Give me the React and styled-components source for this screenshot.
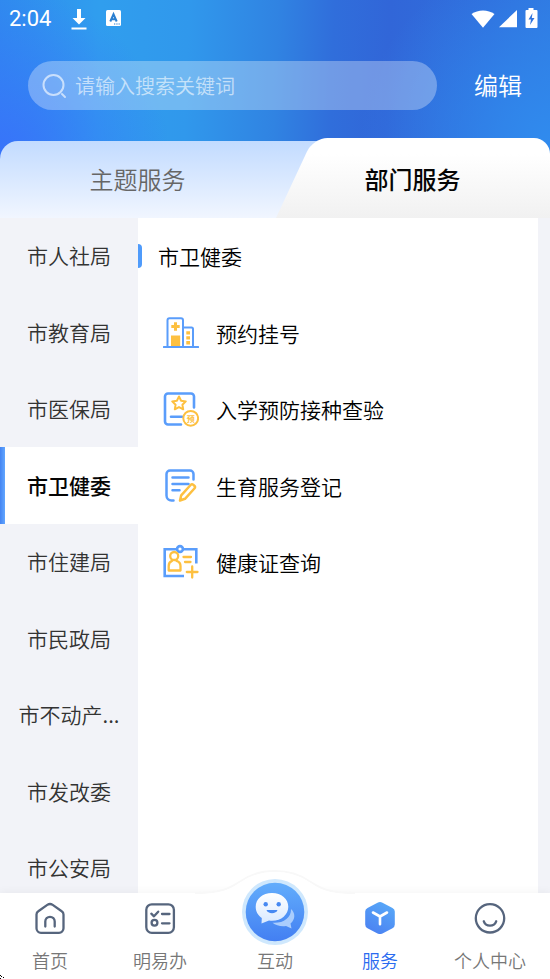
import React from 'react';
import styled, { createGlobalStyle, css } from 'styled-components';

const GlobalStyle = createGlobalStyle`
  *, *::before, *::after { box-sizing: border-box; }
  body {
    margin: 0;
    font-family: "Noto Sans CJK SC", "Noto Sans", sans-serif;
    font-weight: 350;
    color: #000;
    background: #f2f3f8;
  }
  button, input { font: inherit; color: inherit; border: 0; padding: 0; margin: 0; background: none; }
  button { cursor: pointer; }
  h2 { margin: 0; font-weight: inherit; }
`;

const Page = styled.div`
  height: 100vh;
  display: flex;
  flex-direction: column;
  overflow: hidden;
  position: relative;
`;

const Header = styled.header`
  flex: none;
  background:
    radial-gradient(circle at 0 72%, #3873fa 0, rgba(56, 115, 250, 0) 170px),
    radial-gradient(circle at 100% 66%, #308bee 0, rgba(48, 139, 238, 0) 190px),
    linear-gradient(92deg, #2f8bee 0%, #309eee 18%, #3098ec 34%, #3083e2 50%, #306edb 60%, #3166d8 70%, #306fdd 88%, #3078e0 100%);
`;

const StatusBar = styled.div`
  height: 38px;
  padding: 0 9px 0 9px;
  display: flex;
  align-items: center;
  color: #fff;
`;

const Clock = styled.time`
  width: 61px;
  font: 400 22px/26px Roboto, sans-serif;
`;

const StatusIcons = styled.div`
  display: flex;
  align-items: center;
  gap: ${(p) => p.$gap}px;
  margin-left: ${(p) => (p.$end ? 'auto' : '0')};
  svg { display: block; }
`;

const SearchRow = styled.form`
  padding: 23px 28px 28px;
  display: flex;
  align-items: center;
  gap: 37px;
`;

const SearchBox = styled.label`
  flex: 1;
  min-width: 0;
  height: 49px;
  padding: 0 16px 0 13px;
  display: flex;
  align-items: center;
  gap: 8px;
  border-radius: 25px;
  background: rgba(255, 255, 255, 0.31);
  color: rgba(255, 255, 255, 0.62);
  svg { flex: none; }
`;

const SearchInput = styled.input`
  flex: 1;
  min-width: 0;
  font-size: 20px;
  line-height: 30px;
  outline: none;
  color: #fff;
  &::placeholder { color: rgba(255, 255, 255, 0.6); opacity: 1; }
`;

const EditButton = styled.button`
  flex: none;
  font-size: 24px;
  line-height: 36px;
  padding-bottom: 2px;
  color: #fff;
`;

const Tabs = styled.div`
  display: grid;
  grid-template-columns: 1fr 1fr;
  align-items: end;
  height: 80px;
  isolation: isolate;
  position: relative;
  &::before {
    content: '';
    position: absolute;
    inset: 3px 20px 0 0;
    z-index: -1;
    border-radius: 18px 0 0 0;
    background: linear-gradient(#c2dbff, #f1f6ff);
  }
`;

const Tab = styled.button`
  position: relative;
  height: 80px;
  font-size: 24px;
  line-height: 36px;
  padding-top: 1px;
  color: #666;
  ${(p) => p.$active && css`
    color: #050505;
    font-weight: 500;
    isolation: isolate;
    &::before, &::after {
      content: '';
      position: absolute;
      z-index: -1;
      top: 0;
      bottom: 0;
      background: linear-gradient(#fff 20%, #f1f1f1);
    }
    &::before {
      left: 1px;
      width: 70%;
      border-radius: 14px 0 0 0;
      transform: skewX(-25deg);
      transform-origin: 0 100%;
    }
    &::after { left: 30%; right: 0; border-radius: 0 16px 0 0; }
  `}
`;

const Content = styled.main`
  flex: 1;
  min-height: 0;
  overflow: hidden;
  display: grid;
  grid-template-columns: 138px 1fr;
  padding-right: 12px;
`;

const rowRhythm = css`
  height: 76px;
  &:nth-child(even) { height: 77px; }
`;

const Sidebar = styled.nav`
  display: flex;
  flex-direction: column;
`;

const Department = styled.button`
  ${rowRhythm}
  flex: none;
  font-size: 21px;
  line-height: 32px;
  padding-bottom: 2px;
  white-space: nowrap;
  color: #333;
  ${(p) => p.$active && css`
    color: #050505;
    font-weight: 500;
    background: linear-gradient(90deg, #4484f2, #62a6ff) left / 5px 100% no-repeat #fff;
  `}
`;

const Panel = styled.section`
  background: #fff;
  font-size: 21px;
  line-height: 32px;
`;

const PanelRow = styled.div`
  ${rowRhythm}
  display: flex;
  align-items: center;
`;

const PanelTitle = styled.h2`
  display: flex;
  align-items: center;
  gap: 16px;
  font-size: 21px;
  line-height: 32px;
  &::before {
    content: '';
    width: 4px;
    height: 24px;
    border-radius: 0 4px 4px 0;
    background: #4f9bfb;
  }
`;

const Service = styled.button`
  flex: 1;
  display: flex;
  align-items: center;
  gap: 17px;
  padding-left: 25px;
  text-align: left;
  svg { flex: none; }
`;

const BottomNav = styled.nav`
  position: relative;
  flex: none;
  height: 86px;
  display: grid;
  grid-template-columns: 100fr 120fr 110fr 100fr 120fr;
  background: #fff;
  box-shadow: 0 -2px 8px rgba(0, 0, 0, 0.04);
`;

const Bump = styled.svg`
  position: absolute;
  left: 50%;
  top: -23px;
  margin-left: -80px;
`;

const NavItem = styled.button`
  position: relative;
  display: flex;
  flex-direction: column;
  align-items: center;
  justify-content: flex-end;
  gap: 12px;
  padding-bottom: 5px;
  font-size: 18px;
  line-height: 28px;
  color: ${(p) => (p.$active ? '#2a6bf0' : '#777')};
`;

const ChatBadge = styled.svg`
  position: absolute;
  left: 50%;
  top: -14px;
  margin-left: -33px;
`;

const Pointer = styled.svg`
  position: absolute;
  left: 0;
  bottom: 0;
`;

const BLUE = '#5a9dfb';
const YELLOW = '#fdc040';

const Drawing = ({ size = 36, children, ...rest }) => (
  <svg width={size} height={size} viewBox={`0 0 ${size} ${size}`} fill="none" strokeWidth="2.300" strokeLinecap="round" strokeLinejoin="round" aria-hidden="true" {...rest}>
    {children}
  </svg>
);

const HospitalIcon = () => (
  <Drawing stroke={BLUE}>
    <path d="M0.800 32H35.200" strokeWidth="2" />
    <path d="M4.500 32V5.200a2 2 0 0 1 2-2H18a2 2 0 0 1 2 2V32M21 12.500h7.500a1.500 1.500 0 0 1 1.500 1.500V32" strokeWidth="2" />
    <path d="M12.500 7.300v8.400M8.300 11.500h8.400" stroke={YELLOW} strokeWidth="3" strokeLinecap="butt" />
    <path fill={YELLOW} stroke="none" d="M8 20.500h9.200V31H8zM23.300 16.300h3.700v3.300h-3.700zM23.300 21.200h3.700v3.300h-3.700zM23.300 26.100h3.700v3.300h-3.700z" />
  </Drawing>
);

const VaccineIcon = () => (
  <Drawing stroke={BLUE}>
    <path strokeWidth="2.600" d="M31 16.500V5.500a3 3 0 0 0-3-3H5a3 3 0 0 0-3 3v25a3 3 0 0 0 3 3h13M8 25.700h11" />
    <path stroke={YELLOW} strokeWidth="2" d="M16 5.500l2.100 4.200 4.700.7-3.400 3.300.8 4.600-4.200-2.200-4.200 2.200.8-4.600-3.400-3.300 4.700-.7z" />
    <circle cx="27.700" cy="27.300" r="7.400" stroke={YELLOW} strokeWidth="2" />
    <text x="27.700" y="30.500" fontSize="8" fontWeight="700" textAnchor="middle" fill={YELLOW} stroke="none">预</text>
  </Drawing>
);

const RegisterIcon = () => (
  <Drawing stroke={BLUE}>
    <path strokeWidth="2.500" d="M30.500 11.500V6a3.500 3.500 0 0 0-3.500-3.500H7A3.500 3.500 0 0 0 3.500 6v21.500a5 5 0 0 0 5 5H10.500M9.500 9.500H25.500M9.500 16H25.500M9.500 22.300h7" />
    <path stroke={YELLOW} strokeWidth="2.500" d="M17 32.500l1.200-5.200L27.600 17a2 2 0 0 1 2.800-.1l.9.800a2 2 0 0 1 .1 2.800L22 30.800z" />
  </Drawing>
);

const CertificateIcon = () => (
  <Drawing stroke={BLUE}>
    <path d="M14 5.200H1.700V32H21M20 5.200H33.300V19.500" strokeLinecap="butt" strokeLinejoin="miter" strokeWidth="2.600" />
    <circle cx="17" cy="5" r="2.900" strokeWidth="2.600" />
    <g stroke={YELLOW}>
      <circle cx="11.200" cy="12" r="4" />
      <path d="M9 16.800Q5.700 18 5.700 22V26.500H17.500V22Q17.500 18 13.500 16.800M20.500 13H28M22 18h5.500M29.200 22.500V33.500M23.800 28H34.500" />
    </g>
  </Drawing>
);

const HomeIcon = () => (
  <Drawing size={32} stroke="#56657d">
    <path d="M2.500 12.500a4 4 0 0 1 1.800-3.300l9-6.300a5 5 0 0 1 5.400 0l9 6.300a4 4 0 0 1 1.800 3.300V26.300a4.500 4.500 0 0 1-4.500 4.500H7a4.500 4.500 0 0 1-4.500-4.500zM11.300 24.500v-5a4.700 4.700 0 0 1 9.400 0v5" />
  </Drawing>
);

const ChecklistIcon = () => (
  <Drawing size={32} stroke="#56657d">
    <rect x="2.300" y="2.300" width="27.600" height="28.500" rx="5.500" />
    <path d="M7.300 11.700l2.700 2.600 4.200-4.600M18 12h7.500M18 21.300h7.500" />
    <circle cx="10.500" cy="20.700" r="2.900" />
  </Drawing>
);

const ServiceIcon = () => (
  <Drawing size={32}>
    <defs>
      <linearGradient id="hex" x1="0.800" y1="0" x2="0.300" y2="1">
        <stop stopColor="#58a9f8" /><stop offset="1" stopColor="#4b82f2" />
      </linearGradient>
    </defs>
    <path fill="url(#hex)" d="M13.500.8a5 5 0 0 1 5 0l10 5.200a4 4 0 0 1 2.300 3.700V22.500a4 4 0 0 1-2.300 3.700l-10 5.200a5 5 0 0 1-5 0l-10-5.200a4 4 0 0 1-2.300-3.700V9.700A4 4 0 0 1 3.500 6z" />
    <path stroke="#fff" strokeWidth="2.600" d="M9 10.500l7 4L23 10.500M16 14.500V22.200" />
  </Drawing>
);

const ProfileIcon = () => (
  <Drawing size={32} stroke="#56657d">
    <circle cx="16" cy="16.300" r="14.200" />
    <path d="M9.800 19.300c2 5.800 10.400 5.800 12.400 0" />
  </Drawing>
);

const ChatIcon = () => (
  <ChatBadge width="66" height="66" viewBox="0 0 66 66" aria-hidden="true">
    <defs>
      <linearGradient id="disc" x2="0" y2="1">
        <stop stopColor="#62adfc" /><stop offset="1" stopColor="#437ff2" />
      </linearGradient>
      <linearGradient id="bubble" x2="0" y2="1">
        <stop stopColor="#fff" /><stop offset="1" stopColor="#d9e9ff" />
      </linearGradient>
    </defs>
    <circle cx="33" cy="33" r="33" fill="#cfe8fd" />
    <circle cx="33" cy="33" r="29.300" fill="url(#disc)" />
    <path fill="#aacdfd" d="M49 30c4.500 4 4.500 10.500-.5 14.500l1 5-5.500-2.500c-5 .8-10-.5-13.500-3.200C41 44.500 49.500 39 49 30z" />
    <path fill="url(#bubble)" d="M30 14c9.500 0 16.300 6 16.300 13.800S39.500 41.800 30 41.800c-1 0-2 0-3-.2L19.500 44.500l.3-5.500C16 36.500 13.700 32.500 13.700 27.800 13.700 20 20.500 14 30 14z" />
    <circle cx="23.700" cy="25.200" r="2.200" fill="#4789f2" />
    <circle cx="36.700" cy="25.200" r="2.200" fill="#4789f2" />
    <path fill="#4789f2" d="M24.500 31h11c-1 4.200-10 4.200-11 0z" />
  </ChatBadge>
);

const SearchIcon = () => (
  <Drawing size={26} stroke="currentColor" strokeWidth="2">
    <circle cx="12.500" cy="12" r="10" />
    <path d="M21 21l3 3" />
  </Drawing>
);

const departments = ['市人社局', '市教育局', '市医保局', '市卫健委', '市住建局', '市民政局', '市不动产...', '市发改委', '市公安局'];

const services = [
  { name: '预约挂号', Icon: HospitalIcon },
  { name: '入学预防接种查验', Icon: VaccineIcon },
  { name: '生育服务登记', Icon: RegisterIcon },
  { name: '健康证查询', Icon: CertificateIcon },
];

const navItems = [
  { name: '首页', Icon: HomeIcon },
  { name: '明易办', Icon: ChecklistIcon },
  { name: '互动', Icon: ChatIcon },
  { name: '服务', Icon: ServiceIcon },
  { name: '个人中心', Icon: ProfileIcon },
];

export default function App() {
  const current = '市卫健委';
  return (
    <Page>
      <GlobalStyle />
      <Header>
        <StatusBar>
          <Clock>2:04</Clock>
          <StatusIcons $gap={18}>
            <svg width="18" height="24" viewBox="0 0 18 24" fill="#fff" aria-hidden="true">
              <path d="M7 2h4v9h4.500L9 17.500 2.500 11H7zM1.500 20.500h15v2h-15z" />
            </svg>
            <svg width="15" height="18" viewBox="0 0 15 18" aria-hidden="true">
              <rect width="15" height="16" rx="1.500" fill="#fff" />
              <path d="M4.300 11.500L7.500 4.300 10.700 11.500M5.500 9.200h4" fill="none" stroke="#2b7fd0" strokeWidth="2" />
              <path d="M8 14h1.300M10.300 14h1.300M12.500 14h1.300" stroke="#2b7fd0" strokeWidth="1.200" />
            </svg>
          </StatusIcons>
          <StatusIcons $gap={4} $end>
            <svg width="24" height="20" viewBox="0 0 24 20" fill="#fff" aria-hidden="true">
              <path d="M.5 5C7 .2 17 .2 23.500 5L12 18.800z" />
            </svg>
            <svg width="18" height="20" viewBox="0 0 18 20" fill="#fff" aria-hidden="true">
              <path d="M18 1v17.200H0z" />
            </svg>
            <svg width="20" height="24" viewBox="0 0 20 24" aria-hidden="true">
              <path d="M7.500 3V1h5v2h3q1 0 1 1v16q0 1-1 1h-10q-1 0-1-1V4q0-1 1-1z" fill="#fff" />
              <path d="M11.500 6l-4 6.500h2.500L9 18l4.500-7h-2.700z" fill="#3074de" />
            </svg>
          </StatusIcons>
        </StatusBar>
        <SearchRow onSubmit={(e) => e.preventDefault()}>
          <SearchBox>
            <SearchIcon />
            <SearchInput type="text" aria-label="搜索" placeholder="请输入搜索关键词" />
          </SearchBox>
          <EditButton type="button">编辑</EditButton>
        </SearchRow>
        <Tabs role="tablist">
          <Tab role="tab" aria-selected="false">主题服务</Tab>
          <Tab role="tab" aria-selected="true" $active>部门服务</Tab>
        </Tabs>
      </Header>
      <Content>
        <Sidebar aria-label="部门">
          {departments.map((name) => (
            <Department key={name} $active={name === current}>{name}</Department>
          ))}
        </Sidebar>
        <Panel>
          <PanelRow><PanelTitle>{current}</PanelTitle></PanelRow>
          {services.map(({ name, Icon }) => (
            <PanelRow key={name}>
              <Service><Icon />{name}</Service>
            </PanelRow>
          ))}
        </Panel>
      </Content>
      <BottomNav aria-label="主导航">
        <Bump width="160" height="26" viewBox="0 0 160 26" aria-hidden="true">
          <path d="M0 23C30 23 36 17 46 11 56 4 68 1 80 1s24 3 34 10c10 6 16 12 46 12" fill="#fff" stroke="#f8f8f8" strokeWidth="2" />
          <path d="M0 24C30 24 36 18 46 12 56 5 68 2 80 2s24 3 34 10c10 6 16 12 46 12v2H0z" fill="#fff" />
        </Bump>
        {navItems.map(({ name, Icon }) => (
          <NavItem key={name} $active={name === '服务'}><Icon />{name}</NavItem>
        ))}
      </BottomNav>
      <Pointer width="5" height="5" viewBox="0 0 5 5" aria-hidden="true">
        <path d="M0 1h1v1H0zM1 2h1v1H1zM3 3h1v1H3zM0 4h1v1H0z" fill="#000" />
      </Pointer>
    </Page>
  );
}
